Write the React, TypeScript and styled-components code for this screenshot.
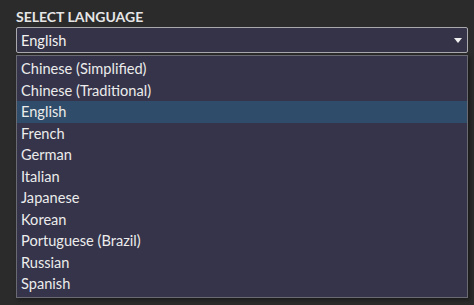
import styled, { createGlobalStyle } from 'styled-components'

const languages = [
  'Chinese (Simplified)',
  'Chinese (Traditional)',
  'English',
  'French',
  'German',
  'Italian',
  'Japanese',
  'Korean',
  'Portuguese (Brazil)',
  'Russian',
  'Spanish',
]

const selected = 'English'

export default function App() {
  return (
    <>
      <GlobalStyle />
      <Page>
        <Label>SELECT LANGUAGE</Label>
        <SelectWrap>
          <SelectBox>
            <span>{selected}</span>
            <Caret />
          </SelectBox>
          <OptionList>
            {languages.map(lang => (
              <Option key={lang} $active={lang === selected}>{lang}</Option>
            ))}
          </OptionList>
        </SelectWrap>
      </Page>
    </>
  )
}

const GlobalStyle = createGlobalStyle`
  body {
    margin: 0;
    background: #2b2b2c;
    font-family: Lato, "Open Sans", sans-serif;
  }
`

const Page = styled.div`
  width: 474px;
  height: 305px;
  padding: 8px 7px 0 16px;
  box-sizing: border-box;
  overflow: hidden;
`

const Label = styled.div`
  font-size: 14px;
  font-weight: 700;
  color: #e6e6e6;
  line-height: 18px;
  margin-bottom: 1px;
`

const SelectWrap = styled.div`
  position: relative;
  width: 452px;
`

const SelectBox = styled.div`
  display: flex;
  align-items: center;
  justify-content: space-between;
  height: 26px;
  box-sizing: border-box;
  padding: 0 5px 0 4px;
  border: 1px solid #a9a9ad;
  border-radius: 2px;
  background: #353347;
  color: #f2f2f2;
  font-size: 14.6px;
`

const Caret = styled.span`
  width: 0;
  height: 0;
  border-left: 4px solid transparent;
  border-right: 4px solid transparent;
  border-top: 5px solid #f0f0f0;
  margin-top: 1px;
`

const OptionList = styled.div`
  position: absolute;
  top: 28px;
  left: 0;
  right: 0;
  padding: 2px 0 2px;
  border: 1px solid #6a6a72;
  background: #35344a;
  box-shadow: 2px 2px 4px rgba(0, 0, 0, 0.4);
`

const Option = styled.div<{ $active?: boolean }>`
  height: 21.5px;
  line-height: 21.5px;
  padding-left: 4px;
  font-size: 14.6px;
  color: #ececec;
  background: ${({ $active }) => ($active ? '#2f4d6a' : 'transparent')};
`
